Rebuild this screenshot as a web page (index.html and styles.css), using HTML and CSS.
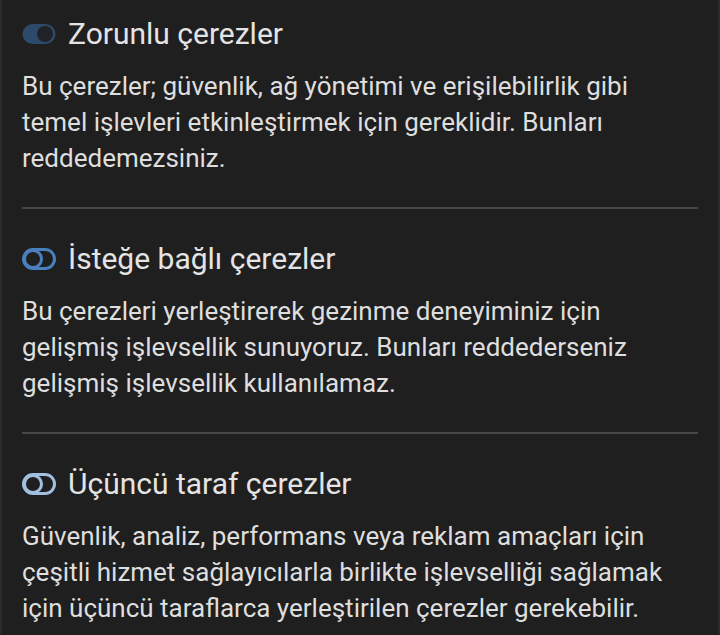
FILE: index.html
```html
<!DOCTYPE html>
<html lang="tr">
<head>
  <meta charset="UTF-8" />
  <meta name="viewport" content="width=device-width, initial-scale=1.0"/>
  <title>Çerez tercihleri</title>
  <link rel="stylesheet" href="styles.css">
</head>
<body>
  <div class="panel">
    <!-- Zorunlu -->
    <section class="cookie-group">
      <h2 class="group-title">
        <svg class="toggle" width="34" height="22" viewBox="0 0 34 22">
          <rect x="0.5" y="1" width="33" height="20" rx="10" fill="#2d4a6b"/>
          <circle cx="23" cy="11" r="8" fill="#1f2226"/>
        </svg>
        Zorunlu çerezler
      </h2>
      <p class="group-text">Bu çerezler; güvenlik, ağ yönetimi ve erişilebilirlik gibi temel işlevleri etkinleştirmek için gereklidir. Bunları reddedemezsiniz.</p>
    </section>

    <hr class="divider">

    <!-- İsteğe bağlı -->
    <section class="cookie-group">
      <h2 class="group-title">
        <svg class="toggle toggle-off" width="34" height="22" viewBox="0 0 34 22">
          <rect x="1.5" y="1.5" width="31" height="19" rx="9.5" fill="none" stroke="currentColor" stroke-width="3"/>
          <circle cx="11" cy="11" r="8.5" fill="none" stroke="currentColor" stroke-width="3"/>
        </svg>
        İsteğe bağlı çerezler
      </h2>
      <p class="group-text">Bu çerezleri yerleştirerek gezinme deneyiminiz için gelişmiş işlevsellik sunuyoruz. Bunları reddederseniz gelişmiş işlevsellik kullanılamaz.</p>
    </section>

    <hr class="divider">

    <!-- Üçüncü taraf -->
    <section class="cookie-group">
      <h2 class="group-title">
        <svg class="toggle toggle-muted" width="34" height="22" viewBox="0 0 34 22">
          <rect x="1.5" y="1.5" width="31" height="19" rx="9.5" fill="none" stroke="currentColor" stroke-width="3"/>
          <circle cx="11" cy="11" r="8.5" fill="none" stroke="currentColor" stroke-width="3"/>
        </svg>
        Üçüncü taraf çerezler
      </h2>
      <p class="group-text">Güvenlik, analiz, performans veya reklam amaçları için çeşitli hizmet sağlayıcılarla birlikte işlevselliği sağlamak için üçüncü taraflarca yerleştirilen çerezler gerekebilir.</p>
    </section>
  </div>
</body>
</html>
```

FILE: styles.css
```css
* {
  margin: 0;
  padding: 0;
  box-sizing: border-box;
}

body {
  font-family: Roboto, 'Noto Sans', sans-serif;
  background-color: #1f1f1f;
  color: #e2e2e2;
}

.panel {
  min-height: 635px;
  border-left: 2px solid #2a2a2a;
  border-right: 2px solid #2a2a2a;
  padding: 16px 20px 0 20px;
}

.group-title {
  display: flex;
  align-items: center;
  gap: 12px;
  font-size: 30px;
  font-weight: 400;
  line-height: 36px;
  color: #e4e4e4;
  margin-bottom: 16px;
}

.toggle {
  flex-shrink: 0;
}

.toggle-off {
  color: #4a80c0;
}

.toggle-muted {
  color: #a3bfdf;
}

.group-text {
  font-size: 26px;
  line-height: 36px;
  color: #dedede;
}

.divider {
  border: none;
  height: 2px;
  background: #474747;
  margin: 31px 0 32px 0;
}
```
